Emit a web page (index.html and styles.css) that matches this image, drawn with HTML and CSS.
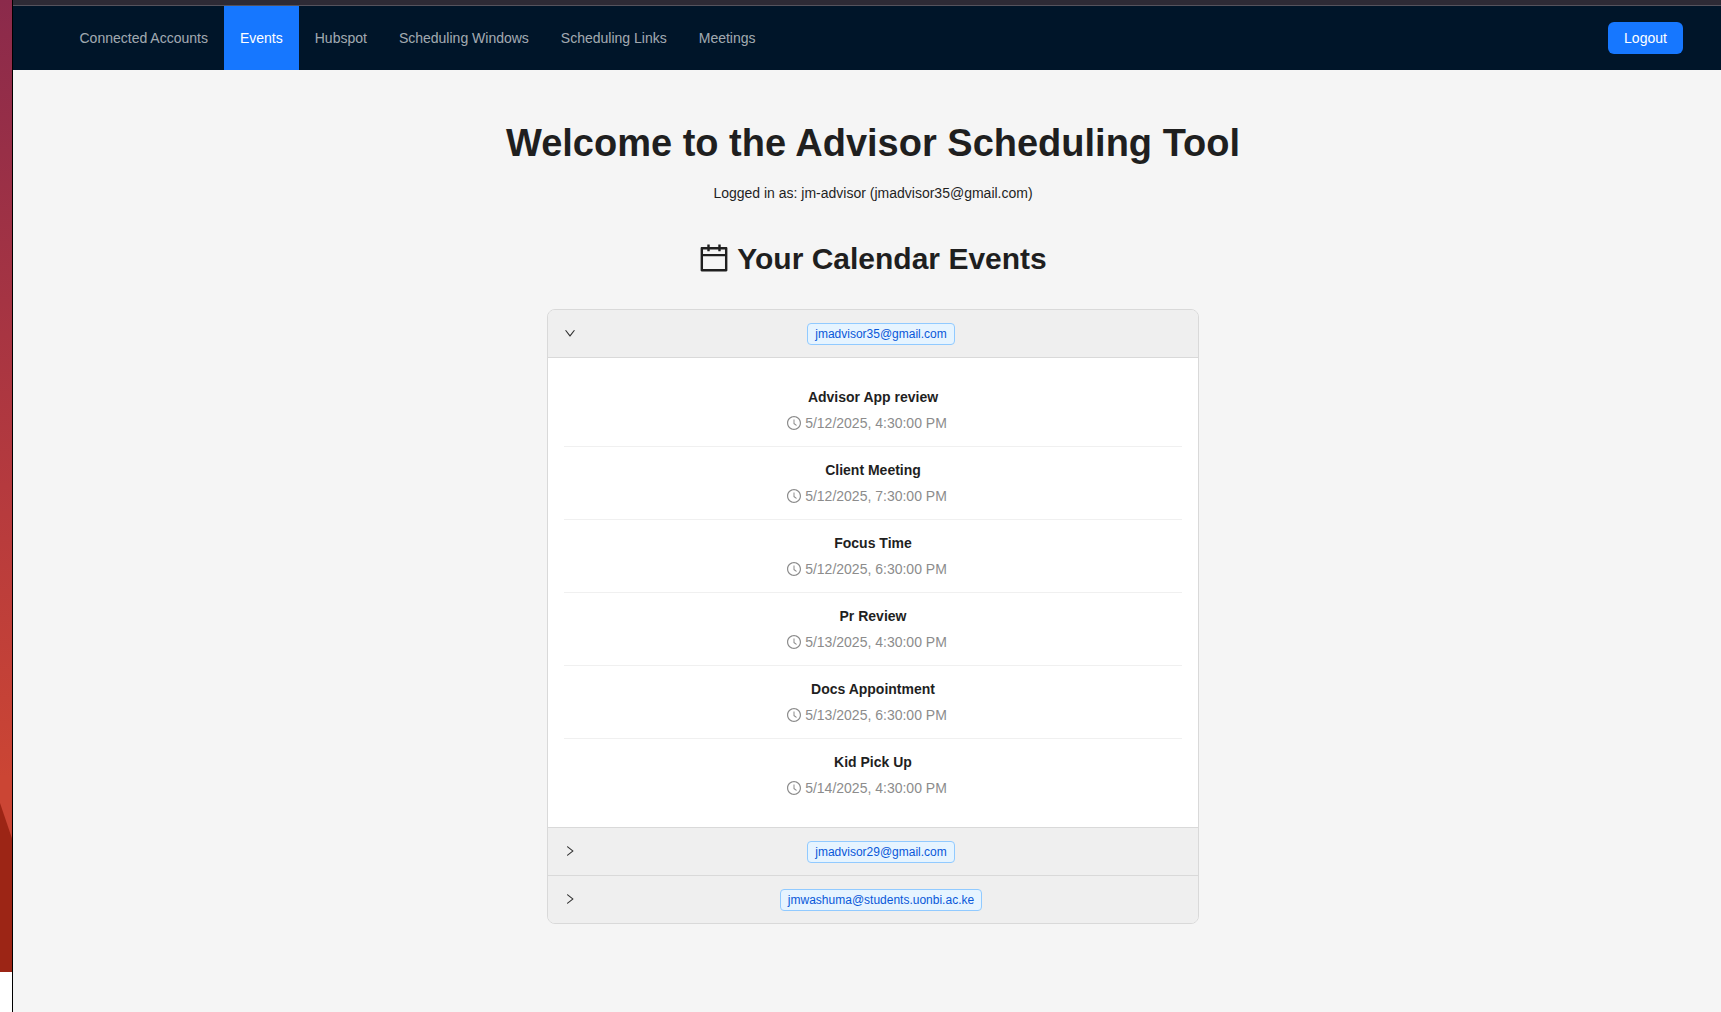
FILE: index.html
```html
<!DOCTYPE html>
<html lang="en">
<head>
  <meta charset="UTF-8">
  <title>Advisor Scheduling Tool</title>
  <link rel="stylesheet" href="styles.css">
</head>
<body>
  <div class="wallpaper">
    <div class="wallpaper-paint"></div>
  </div>
  <div class="window">
    <div class="window-edge"></div>
    <nav class="navbar">
      <div class="nav-links">
        <a href="#" class="nav-link">Connected Accounts</a>
        <a href="#" class="nav-link active">Events</a>
        <a href="#" class="nav-link">Hubspot</a>
        <a href="#" class="nav-link">Scheduling Windows</a>
        <a href="#" class="nav-link">Scheduling Links</a>
        <a href="#" class="nav-link">Meetings</a>
      </div>
      <button class="logout-btn">Logout</button>
    </nav>

    <main class="content">
      <h1 class="page-title">Welcome to the Advisor Scheduling Tool</h1>
      <p class="logged-in">Logged in as: jm-advisor (jmadvisor35@gmail.com)</p>
      <h2 class="section-title">
        <svg class="calendar-icon" viewBox="64 64 896 896" fill="currentColor"><path d="M880 184H712v-64c0-4.4-3.6-8-8-8h-56c-4.4 0-8 3.6-8 8v64H384v-64c0-4.4-3.6-8-8-8h-56c-4.4 0-8 3.6-8 8v64H144c-17.7 0-32 14.3-32 32v664c0 17.7 14.3 32 32 32h736c17.7 0 32-14.3 32-32V216c0-17.7-14.3-32-32-32zm-40 656H184V460h656v380zM184 392V256h128v48c0 4.4 3.6 8 8 8h56c4.4 0 8-3.6 8-8v-48h256v48c0 4.4 3.6 8 8 8h56c4.4 0 8-3.6 8-8v-48h128v136H184z"/></svg>
        Your Calendar Events
      </h2>

      <div class="collapse">
        <div class="collapse-header">
          <svg class="arrow arrow-down" viewBox="64 64 896 896" fill="currentColor"><path d="M765.7 486.8L314.9 134.7A7.97 7.97 0 00302 141v77.3c0 4.9 2.3 9.6 6.1 12.6l360 281.1-360 281.1c-3.9 3-6.1 7.7-6.1 12.6V883c0 6.7 7.7 10.4 12.9 6.3l450.8-352.1a31.96 31.96 0 000-50.4z"/></svg>
          <div class="collapse-title"><span class="tag">jmadvisor35@gmail.com</span></div>
        </div>
        <div class="collapse-body">
          <div class="event">
            <div class="event-name">Advisor App review</div>
            <div class="event-time"><svg class="clock-icon" viewBox="64 64 896 896" fill="currentColor"><path d="M512 64C264.6 64 64 264.6 64 512s200.6 448 448 448 448-200.6 448-448S759.4 64 512 64zm0 820c-205.4 0-372-166.6-372-372s166.6-372 372-372 372 166.6 372 372-166.6 372-372 372z"/><path d="M686.7 638.6L544.1 535.5V288c0-4.4-3.6-8-8-8H488c-4.4 0-8 3.6-8 8v275.4c0 2.6 1.2 5 3.3 6.5l165.4 120.6c3.6 2.6 8.6 1.8 11.2-1.7l28.6-39c2.6-3.7 1.8-8.7-1.8-11.2z"/></svg>5/12/2025, 4:30:00 PM</div>
          </div>
          <div class="event">
            <div class="event-name">Client Meeting</div>
            <div class="event-time"><svg class="clock-icon" viewBox="64 64 896 896" fill="currentColor"><path d="M512 64C264.6 64 64 264.6 64 512s200.6 448 448 448 448-200.6 448-448S759.4 64 512 64zm0 820c-205.4 0-372-166.6-372-372s166.6-372 372-372 372 166.6 372 372-166.6 372-372 372z"/><path d="M686.7 638.6L544.1 535.5V288c0-4.4-3.6-8-8-8H488c-4.4 0-8 3.6-8 8v275.4c0 2.6 1.2 5 3.3 6.5l165.4 120.6c3.6 2.6 8.6 1.8 11.2-1.7l28.6-39c2.6-3.7 1.8-8.7-1.8-11.2z"/></svg>5/12/2025, 7:30:00 PM</div>
          </div>
          <div class="event">
            <div class="event-name">Focus Time</div>
            <div class="event-time"><svg class="clock-icon" viewBox="64 64 896 896" fill="currentColor"><path d="M512 64C264.6 64 64 264.6 64 512s200.6 448 448 448 448-200.6 448-448S759.4 64 512 64zm0 820c-205.4 0-372-166.6-372-372s166.6-372 372-372 372 166.6 372 372-166.6 372-372 372z"/><path d="M686.7 638.6L544.1 535.5V288c0-4.4-3.6-8-8-8H488c-4.4 0-8 3.6-8 8v275.4c0 2.6 1.2 5 3.3 6.5l165.4 120.6c3.6 2.6 8.6 1.8 11.2-1.7l28.6-39c2.6-3.7 1.8-8.7-1.8-11.2z"/></svg>5/12/2025, 6:30:00 PM</div>
          </div>
          <div class="event">
            <div class="event-name">Pr Review</div>
            <div class="event-time"><svg class="clock-icon" viewBox="64 64 896 896" fill="currentColor"><path d="M512 64C264.6 64 64 264.6 64 512s200.6 448 448 448 448-200.6 448-448S759.4 64 512 64zm0 820c-205.4 0-372-166.6-372-372s166.6-372 372-372 372 166.6 372 372-166.6 372-372 372z"/><path d="M686.7 638.6L544.1 535.5V288c0-4.4-3.6-8-8-8H488c-4.4 0-8 3.6-8 8v275.4c0 2.6 1.2 5 3.3 6.5l165.4 120.6c3.6 2.6 8.6 1.8 11.2-1.7l28.6-39c2.6-3.7 1.8-8.7-1.8-11.2z"/></svg>5/13/2025, 4:30:00 PM</div>
          </div>
          <div class="event">
            <div class="event-name">Docs Appointment</div>
            <div class="event-time"><svg class="clock-icon" viewBox="64 64 896 896" fill="currentColor"><path d="M512 64C264.6 64 64 264.6 64 512s200.6 448 448 448 448-200.6 448-448S759.4 64 512 64zm0 820c-205.4 0-372-166.6-372-372s166.6-372 372-372 372 166.6 372 372-166.6 372-372 372z"/><path d="M686.7 638.6L544.1 535.5V288c0-4.4-3.6-8-8-8H488c-4.4 0-8 3.6-8 8v275.4c0 2.6 1.2 5 3.3 6.5l165.4 120.6c3.6 2.6 8.6 1.8 11.2-1.7l28.6-39c2.6-3.7 1.8-8.7-1.8-11.2z"/></svg>5/13/2025, 6:30:00 PM</div>
          </div>
          <div class="event">
            <div class="event-name">Kid Pick Up</div>
            <div class="event-time"><svg class="clock-icon" viewBox="64 64 896 896" fill="currentColor"><path d="M512 64C264.6 64 64 264.6 64 512s200.6 448 448 448 448-200.6 448-448S759.4 64 512 64zm0 820c-205.4 0-372-166.6-372-372s166.6-372 372-372 372 166.6 372 372-166.6 372-372 372z"/><path d="M686.7 638.6L544.1 535.5V288c0-4.4-3.6-8-8-8H488c-4.4 0-8 3.6-8 8v275.4c0 2.6 1.2 5 3.3 6.5l165.4 120.6c3.6 2.6 8.6 1.8 11.2-1.7l28.6-39c2.6-3.7 1.8-8.7-1.8-11.2z"/></svg>5/14/2025, 4:30:00 PM</div>
          </div>
        </div>
        <div class="collapse-header closed">
          <svg class="arrow" viewBox="64 64 896 896" fill="currentColor"><path d="M765.7 486.8L314.9 134.7A7.97 7.97 0 00302 141v77.3c0 4.9 2.3 9.6 6.1 12.6l360 281.1-360 281.1c-3.9 3-6.1 7.7-6.1 12.6V883c0 6.7 7.7 10.4 12.9 6.3l450.8-352.1a31.96 31.96 0 000-50.4z"/></svg>
          <div class="collapse-title"><span class="tag">jmadvisor29@gmail.com</span></div>
        </div>
        <div class="collapse-header closed last">
          <svg class="arrow" viewBox="64 64 896 896" fill="currentColor"><path d="M765.7 486.8L314.9 134.7A7.97 7.97 0 00302 141v77.3c0 4.9 2.3 9.6 6.1 12.6l360 281.1-360 281.1c-3.9 3-6.1 7.7-6.1 12.6V883c0 6.7 7.7 10.4 12.9 6.3l450.8-352.1a31.96 31.96 0 000-50.4z"/></svg>
          <div class="collapse-title"><span class="tag">jmwashuma@students.uonbi.ac.ke</span></div>
        </div>
      </div>
    </main>
  </div>
</body>
</html>
```

FILE: styles.css
```css
* {
  box-sizing: border-box;
}

html, body {
  height: 100%;
}

body {
  margin: 0;
  display: flex;
  overflow: hidden;
  background-color: #fff;
  font-family: "Liberation Sans", Arial, sans-serif;
  font-size: 14px;
  color: #1f1f1f;
}

/* bit of desktop showing to the left of the browser */
.wallpaper {
  width: 12px;
  flex: none;
  height: 972px;
  position: relative;
  background: linear-gradient(to bottom, #8b2a4b, #b53a3e 50%, #cb4534 80%);
}

.wallpaper-paint {
  position: absolute;
  left: 0;
  right: 0;
  bottom: 0;
  height: 169px;
  background-color: #9c2515;
  clip-path: polygon(0 0, 100% 21%, 100% 100%, 0 100%);
}

.window {
  flex: 1;
  min-width: 0;
  display: flex;
  flex-direction: column;
  border-left: 1px solid #000;
  background-color: #f5f5f5;
}

.window-edge {
  height: 6px;
  flex: none;
  background-color: #2d2a35;
  border-bottom: 1px solid #55525c;
}

.navbar {
  height: 64px;
  flex: none;
  display: flex;
  align-items: center;
  justify-content: space-between;
  padding: 0 38px 0 50.5px;
  background-color: #001529;
}

.nav-links {
  display: flex;
  height: 100%;
}

.nav-link {
  display: flex;
  align-items: center;
  padding: 0 16px;
  color: rgba(255, 255, 255, 0.65);
  text-decoration: none;
}

.nav-link.active {
  background-color: #1677ff;
  color: #fff;
}

.logout-btn {
  width: 75px;
  height: 32px;
  border: none;
  border-radius: 6px;
  background-color: #1677ff;
  color: #fff;
  font-family: inherit;
  font-size: 14px;
}

.content {
  flex: 1;
  display: flex;
  flex-direction: column;
  align-items: center;
  padding: 48px 0 0 12px;
}

.page-title {
  margin: 0;
  font-size: 38px;
  line-height: 50px;
  font-weight: 700;
}

.logged-in {
  margin: 14px 0 0;
  line-height: 22px;
}

.section-title {
  display: flex;
  align-items: center;
  gap: 8px;
  margin: 35px 0 0;
  font-size: 30px;
  line-height: 40px;
  font-weight: 700;
}

.calendar-icon {
  width: 30px;
  height: 30px;
  margin-bottom: 3px;
}

.collapse {
  width: 652px;
  margin-top: 30px;
  border: 1px solid #d9d9d9;
  border-radius: 8px;
  overflow: hidden;
}

.collapse-header {
  height: 48px;
  display: flex;
  align-items: center;
  padding: 0 16px;
  background-color: #efefef;
  border-bottom: 1px solid #d9d9d9;
}

.collapse-header.last {
  height: 47px;
  border-bottom: none;
}

.arrow {
  width: 12px;
  height: 12px;
  flex: none;
  margin-bottom: 2px;
  color: #333;
}

.arrow-down {
  transform: rotate(90deg);
}

.collapse-title {
  flex: 1;
  text-align: center;
  padding-left: 4px;
}

.tag {
  display: inline-block;
  height: 22px;
  padding: 0 7px;
  border: 1px solid #91caff;
  border-radius: 4px;
  background-color: #e6f4ff;
  color: #0958d9;
  font-size: 12px;
  line-height: 20px;
}

.collapse-body {
  padding: 16px 16px 15px;
  background-color: #fff;
  border-bottom: 1px solid #d9d9d9;
}

.event {
  height: 73px;
  padding-top: 12px;
  text-align: center;
  border-bottom: 1px solid #f0f0f0;
}

.event:last-child {
  border-bottom: none;
}

.event-name {
  font-weight: 700;
  line-height: 22px;
}

.event-time {
  margin-top: 4px;
  padding-right: 12px;
  line-height: 22px;
  color: #8c8c8c;
}

.clock-icon {
  width: 14px;
  height: 14px;
  margin-right: 4px;
  vertical-align: -2px;
}
```
